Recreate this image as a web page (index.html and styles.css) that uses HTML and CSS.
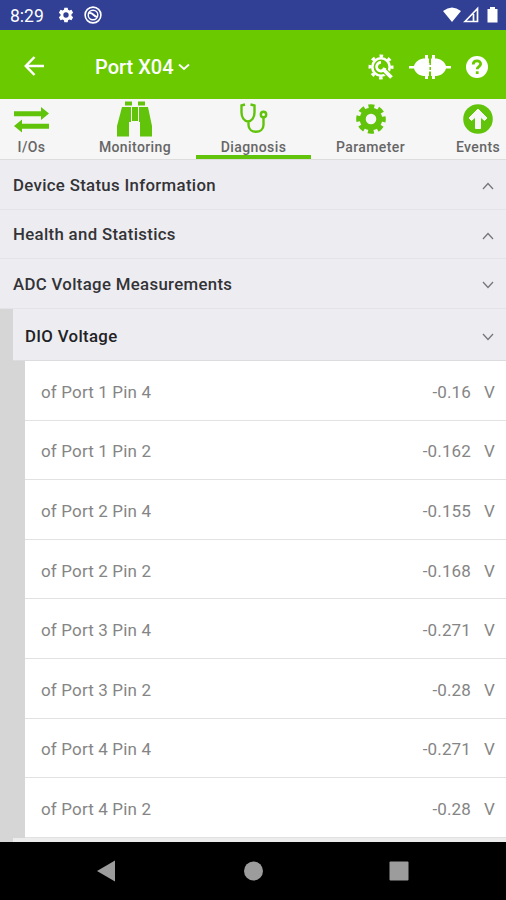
FILE: index.html
```html
<!DOCTYPE html>
<html lang="en">
<head>
<meta charset="utf-8">
<title>Port X04</title>
<link rel="stylesheet" href="styles.css">
</head>
<body>
<div class="screen">
  <header class="status">
    <span class="time">8:29</span>
    <svg class="status-gear" width="16" height="16" viewBox="0 0 24 24"><path fill="#fff" fill-rule="evenodd" d="M9.500 1h5l.6 3.200 2 1.200 3.100-1.100 2.500 4.300-2.500 2.100v2.600l2.500 2.100-2.500 4.300-3.100-1.100-2 1.200-.6 3.200h-5l-.6-3.200-2-1.200-3.100 1.100-2.500-4.300 2.500-2.100v-2.600L1.300 8.600l2.500-4.300 3.100 1.100 2-1.200zM12 8a4 4 0 1 0 0 8 4 4 0 0 0 0-8z"/></svg>
    <svg class="status-app" width="18" height="18" viewBox="0 0 18 18" fill="none" stroke="#fff"><circle cx="9" cy="9" r="7.900" stroke-width="1.600"/><circle cx="9" cy="9" r="4.800" stroke-width="1.400"/><path stroke-width="2" d="M5 7.500c3-2 4 2.500 8 3.500"/></svg>
    <span class="spacer"></span>
    <svg width="55" height="18" viewBox="0 0 55 18"><path fill="#fff" d="M0 5Q9-2 18 5L9 16zM44.500 3h2.500V1h5v2h2.500v13.500h-10z"/><path fill="none" stroke="#fff" stroke-width="1.700" d="M22 15.500L34.500 2.500v13zM30.500 8v7"/></svg>
  </header>
  <div class="appbar">
    <svg class="back" width="21" height="20" viewBox="0 0 21 20" fill="none" stroke="#fff" stroke-width="2.500"><path d="M20 10H2M10.500 1L1.800 10l8.700 9"/></svg>
    <h1>Port X04</h1>
    <svg class="title-caret" width="12" height="8" viewBox="0 0 12 8" fill="none" stroke="#fff" stroke-width="1.900"><path d="M1 1.500l5 4.500 5-4.500"/></svg>
    <span class="spacer"></span>
    <svg class="tool" width="26" height="26" viewBox="-13 -13 26 26"><g fill="none" stroke="#fff"><circle r="8.700" stroke-width="2.600"/><circle r="11" stroke-width="3" stroke-dasharray="3.600 5.039" stroke-dashoffset="1.800"/></g><path stroke="#6bc900" stroke-width="6" d="M3 3l9 9"/><path fill="none" stroke="#fff" stroke-width="2.800" d="M0-4.600A4.300 4.300 0 1 0 4 1"/><path stroke="#fff" stroke-width="3.800" d="M1.500 1.500l9 9"/></svg>
    <svg class="plug" width="42" height="26" viewBox="0 0 42 26"><path fill="#fff" d="M0 12h5C6.500 7 11 4.500 16 4.500V1h3v3.500h1V9h2V4.500h1V1h3v3.500c5 0 9.500 2.500 11 7.500h5v2.500h-5c-1.500 5-6 7.500-11 7.500v3h-3v-3h-1v-4.500h-2V22h-1v3h-3v-3c-5 0-9.500-2.500-11-7.500H0z"/><path stroke="#6bc900" stroke-width="1.500" stroke-dasharray="3 2" d="M21.200 3v21"/></svg>
    <svg class="help" width="22" height="22" viewBox="0 0 22 22"><circle cx="11" cy="11" r="11" fill="#fff"/><path d="M7.200 8.500c.2-5.200 7.900-4.500 7.400-.3-.3 2.500-3.400 2.300-3.400 5" fill="none" stroke="#6bc900" stroke-width="2.800"/><path fill="#6bc900" d="M9.800 15.300h2.800V18H9.800z"/></svg>
  </div>
  <nav class="tabs">
    <div class="tab ios"><svg width="36" height="26" viewBox="0 0 36 26" fill="#61c40b"><path d="M0 4.200h27V0l8 6.500-8 6.500V9.300H0zM35 16.700H8v-4.200L0 19l8 6.500V21.800h27z"/></svg><span>I/Os</span></div>
    <div class="tab monitoring"><svg width="36" height="36" viewBox="0 0 36 36" fill="#61c40b"><path d="M8 0.500h7v4H8zM21 0.500h7v4h-7zM5 6h9v15h-2v14.500H0V25zM15 6h6v14h-6zM22 6h9l4 19v10.500H23V21h-1z"/></svg><span>Monitoring</span></div>
    <div class="tab diagnosis active"><svg width="30" height="30" viewBox="0 0 30 30" fill="none" stroke="#61c40b" stroke-width="2.400"><path d="M6 1.500L2.500 2.500v7c0 5 3 9 6.500 9s6.500-4 6.500-9v-7l-4-1M9.500 19v3c0 9 15 9 15 0v-7"/><circle cx="24.500" cy="11.500" r="2.700"/></svg><span>Diagnosis</span></div>
    <div class="tab parameter"><svg width="30" height="30" viewBox="-15 -15 30 30" fill="none" stroke="#61c40b"><circle r="8.300" stroke-width="6"/><circle r="12.400" stroke-width="4.800" stroke-dasharray="5.800 3.939" stroke-dashoffset="2.900"/></svg><span>Parameter</span></div>
    <div class="tab events"><svg width="30" height="30" viewBox="0 0 30 30"><circle cx="15" cy="15" r="14.800" fill="#61c40b"/><path fill="#f7f7f7" stroke="#f7f7f7" stroke-linejoin="round" d="M15 5l9 9-2.500 2.500-4-3.500v11.500h-5V13l-4 3.500L6 14z"/></svg><span>Events</span></div>
  </nav>
  <main class="content">
    <div class="section"><h2>Device Status Information</h2><svg class="chev" viewBox="0 0 12 8"><path d="M1 7l5-5.500L11 7"/></svg></div>
    <div class="section"><h2>Health and Statistics</h2><svg class="chev" viewBox="0 0 12 8"><path d="M1 7l5-5.500L11 7"/></svg></div>
    <div class="section"><h2>ADC Voltage Measurements</h2><svg class="chev" viewBox="0 0 12 8"><path d="M1 1l5 5.500L11 1"/></svg></div>
    <div class="nested">
      <div class="section sub"><h2>DIO Voltage</h2><svg class="chev" viewBox="0 0 12 8"><path d="M1 1l5 5.500L11 1"/></svg></div>
      <div class="rows">
        <div class="row"><span class="label">of Port 1 Pin 4</span><span>-0.16</span><span class="unit">V</span></div>
        <div class="row"><span class="label">of Port 1 Pin 2</span><span>-0.162</span><span class="unit">V</span></div>
        <div class="row"><span class="label">of Port 2 Pin 4</span><span>-0.155</span><span class="unit">V</span></div>
        <div class="row"><span class="label">of Port 2 Pin 2</span><span>-0.168</span><span class="unit">V</span></div>
        <div class="row"><span class="label">of Port 3 Pin 4</span><span>-0.271</span><span class="unit">V</span></div>
        <div class="row"><span class="label">of Port 3 Pin 2</span><span>-0.28</span><span class="unit">V</span></div>
        <div class="row"><span class="label">of Port 4 Pin 4</span><span>-0.271</span><span class="unit">V</span></div>
        <div class="row"><span class="label">of Port 4 Pin 2</span><span>-0.28</span><span class="unit">V</span></div>
      </div>
      <div class="next"></div>
    </div>
  </main>
  <footer class="android-nav">
    <svg width="506" height="58" viewBox="0 0 506 58" fill="#9c9c9c"><path d="M97 29l18-10.500v21z"/><circle cx="253.500" cy="29" r="9.500"/><rect x="389.500" y="19.500" width="19" height="19" rx="1"/></svg>
  </footer>
</div>
</body>
</html>
```
FILE: styles.css
```css
* { box-sizing: border-box; }
body { margin: 0; font-family: Roboto, "Liberation Sans", sans-serif; }
svg { display: block; flex: none; }
.screen { width: 506px; height: 900px; display: flex; flex-direction: column; overflow: hidden; background: #d6d6d6; }
.spacer { flex: 1; }
.status { height: 30px; flex: none; background: #314094; color: #fff; display: flex; align-items: center; padding: 0 8px 0 10px; }
.time { font-size: 17.5px; width: 48px; padding-top: 2px; }
.status-app { margin-left: 10px; }
.appbar { height: 69px; flex: none; background: #6bc900; color: #fff; display: flex; align-items: center; padding: 4px 18px 0 24px; }
.back { margin-top: -2px; }
.appbar h1 { margin: 0 4px 0 50px; font-size: 20px; font-weight: 500; line-height: 24px; width: 79px; white-space: nowrap; }
.plug { margin: 0 15px 0 15px; }
.tabs { height: 61px; flex: none; background: #f6f6f6; border-bottom: 1px solid #ddd; display: flex; overflow: hidden; }
.tab { flex: none; height: 60px; display: grid; grid-template-rows: 40px 16px 4px; justify-items: center; align-items: center; font-size: 14px; font-weight: 500; letter-spacing: .4px; color: #666; }
.tab span { line-height: 15px; padding-top: 1px; }
.ios { width: 63px; }
.ios svg { margin-top: 2px; }
.monitoring { width: 133px; padding-left: 11px; }
.diagnosis { width: 115px; }
.diagnosis svg { margin-top: -2px; }
.parameter { width: 119px; }
.events { width: 96px; }
.active::after { content: ""; width: 100%; height: 4px; background: #61c40b; }
.content { height: 682px; flex: none; background: #d6d6d6; overflow: hidden; }
.section { height: 49.500px; background: #ededf1; border-bottom: 1px solid #e4e4e8; display: flex; align-items: center; justify-content: space-between; padding: 1px 12px 0 13px; }
.section h2 { margin: 0; font-size: 16.800px; font-weight: 500; letter-spacing: .33px; color: #333337; }
.chev { width: 12px; height: 8px; margin-top: 3px; fill: none; stroke: #77777b; stroke-width: 1.300; }
.nested { padding-left: 13px; }
.sub { height: 52.500px; padding-left: 12px; border-bottom-color: #dcdce0; padding-top: 3px; }
.sub h2 { color: #222226; }
.rows { margin-left: 12px; }
.row { height: 59.600px; background: #fff; border-bottom: 1px solid #e2e2e2; display: flex; align-items: center; padding: 3px 11px 0 16px; font-size: 17px; color: #858585; letter-spacing: .15px; }
.label { flex: 1; }
.unit { margin-left: 13px; }
.next { height: 6px; background: #ececec; }
.android-nav { height: 58px; background: #000; flex: none; }
```
